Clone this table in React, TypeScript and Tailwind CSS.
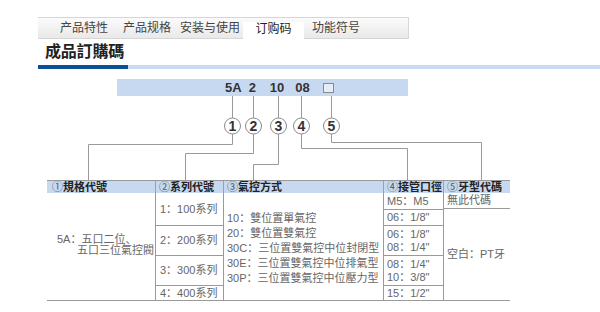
import React from 'react';

const font = "font-['Liberation_Sans','Noto_Sans_CJK_SC',sans-serif]";

function Tabs() {
  return (
    <div className="ml-[38px] mt-[17px] flex h-[22px] w-[371px] items-center border-b border-r border-t border-[#d6d6d6] bg-gradient-to-b from-[#fbfbfb] to-[#e9e9e9] pl-[22px] text-[12px] leading-none text-[#444]">
      <span className="mr-[15px]">产品特性</span>
      <span className="mr-[9px]">产品规格</span>
      <span className="mr-[3px]">安装与使用</span>
      <span className="-mb-px mt-[4px] flex w-[61px] items-start justify-center self-stretch bg-white pt-[1px] text-[#222]">订购码</span>
      <span className="ml-[8px]">功能符号</span>
    </div>
  );
}

function Connectors() {
  const stroke = '#9a9a9a';
  const circles = [
    { x: 232, n: '1' },
    { x: 253, n: '2' },
    { x: 278, n: '3' },
    { x: 301, n: '4' },
    { x: 331, n: '5' },
  ];
  // local y = page y - 93
  const paths = [
    'M232.5 38 V48.5 H88.5 V84',
    'M253.5 38 V57.5 H185.5 V84',
    'M278.5 38 V68.5 H253.5 V84',
    'M301.5 38 V52.5 H407.5 V84',
    'M331.5 38 V46.5 H481.5 V84',
  ];
  return (
    <svg width="600" height="84" className="block">
      {circles.map((c) => (
        <line key={'v' + c.n} x1={c.x + 0.5} y1={0} x2={c.x + 0.5} y2={22} stroke={stroke} />
      ))}
      {paths.map((d) => (
        <path key={d} d={d} fill="none" stroke={stroke} />
      ))}
      {circles.map((c) => (
        <g key={c.n}>
          <circle cx={c.x + 0.5} cy={30} r={8} fill="#fff" stroke="#8a8a8a" />
          <text
            x={c.x + 0.5}
            y={35}
            textAnchor="middle"
            fontFamily="Liberation Sans, Arial, sans-serif"
            fontWeight="bold"
            fontSize="14"
            fill="#333"
          >
            {c.n}
          </text>
        </g>
      ))}
    </svg>
  );
}

function Head({ n, label, w, first }: { n: string; label: string; w: string; first?: boolean }) {
  return (
    <div className={`${w} flex items-center whitespace-nowrap pl-[3px] ${first ? 'pl-[5px]' : 'border-l border-[#a0a0a0]'}`}>
      <span className="font-normal text-[#555]">{n}</span>
      <span className="font-bold text-[#222]">{label}</span>
    </div>
  );
}

export default function App() {
  return (
    <div className={`${font} relative h-[312px] w-[600px] overflow-hidden bg-white`}>
      <Tabs />

      <h2 className="ml-[45px] mt-[4px] text-[16px] font-bold leading-[18px] tracking-[-0.2px] text-[#222]">成品訂購碼</h2>

      <div className="mt-[4px] flex h-[4px]">
        <div className="ml-[38px] w-[90px] bg-[#0c4f98]"></div>
        <div className="flex-1 bg-[#c9dbf0]"></div>
      </div>

      <div className="ml-[117px] mt-[10px] flex h-[17px] w-[291px] items-center bg-[#c7d9f0] pl-[108px] text-[13px] font-bold leading-none text-[#333]">
        <span>5A</span>
        <span className="ml-[7px]">2</span>
        <span className="ml-[14px]">10</span>
        <span className="ml-[11px]">08</span>
        <span className="ml-[13px] h-[10px] w-[11px] border border-[#8a8a8a] bg-[#e4ecf6]"></span>
      </div>

      <Connectors />

      <div className="ml-[47px] w-[463px] text-[11px] leading-none">
        <div className="flex h-[13px] border-t border-[#9a9a9a] bg-[#c6d9f1]">
          <Head n="①" label="規格代號" w="w-[108px]" first />
          <Head n="②" label="系列代號" w="w-[68px]" />
          <Head n="③" label="氣控方式" w="w-[160px]" />
          <Head n="④" label="接管口徑" w="w-[60px]" />
          <Head n="⑤" label="牙型代碼" w="w-[67px]" />
        </div>

        <div className="flex h-[108px] border-b border-[#9a9a9a] text-[#666]">
          <div className="flex w-[108px] items-center pb-[3px] pl-[10px] leading-[11px]">
            <div>
              <div>5A：五口二位、</div>
              <div className="pl-[20px]">五口三位氣控閥</div>
            </div>
          </div>

          <div className="flex w-[68px] flex-col border-l border-[#9a9a9a]">
            <div className="flex h-[33px] items-center border-b border-[#9a9a9a] pl-[4px]">1：100系列</div>
            <div className="flex h-[30px] items-center border-b border-[#9a9a9a] pl-[4px]">2：200系列</div>
            <div className="flex h-[30px] items-center border-b border-[#9a9a9a] pl-[4px]">3：300系列</div>
            <div className="flex flex-1 items-center pl-[4px]">4：400系列</div>
          </div>

          <div className="flex w-[160px] flex-col justify-center border-l border-[#9a9a9a] pl-[3px] pt-[3px] leading-[15px]">
            <div>10：雙位置單氣控</div>
            <div>20：雙位置雙氣控</div>
            <div>30C：三位置雙氣控中位封閉型</div>
            <div>30E：三位置雙氣控中位排氣型</div>
            <div>30P：三位置雙氣控中位壓力型</div>
          </div>

          <div className="flex w-[60px] flex-col border-l border-[#9a9a9a] leading-[13px]">
            <div className="flex h-[17px] items-center border-b border-[#9a9a9a] pl-[3px]">M5：M5</div>
            <div className="flex h-[16px] items-center border-b border-[#9a9a9a] pl-[3px]">06：1/8"</div>
            <div className="flex h-[30px] flex-col justify-center border-b border-[#9a9a9a] pl-[3px]">
              <div>06：1/8"</div>
              <div>08：1/4"</div>
            </div>
            <div className="flex h-[30px] flex-col justify-center border-b border-[#9a9a9a] pl-[3px]">
              <div>08：1/4"</div>
              <div>10：3/8"</div>
            </div>
            <div className="flex flex-1 items-center pl-[3px]">15：1/2"</div>
          </div>

          <div className="flex w-[67px] flex-col border-l border-[#9a9a9a]">
            <div className="flex h-[16px] items-center border-b border-[#9a9a9a] pl-[3px]">無此代碼</div>
            <div className="flex flex-1 items-center pl-[3px]">空白：PT牙</div>
          </div>
        </div>
      </div>
    </div>
  );
}
